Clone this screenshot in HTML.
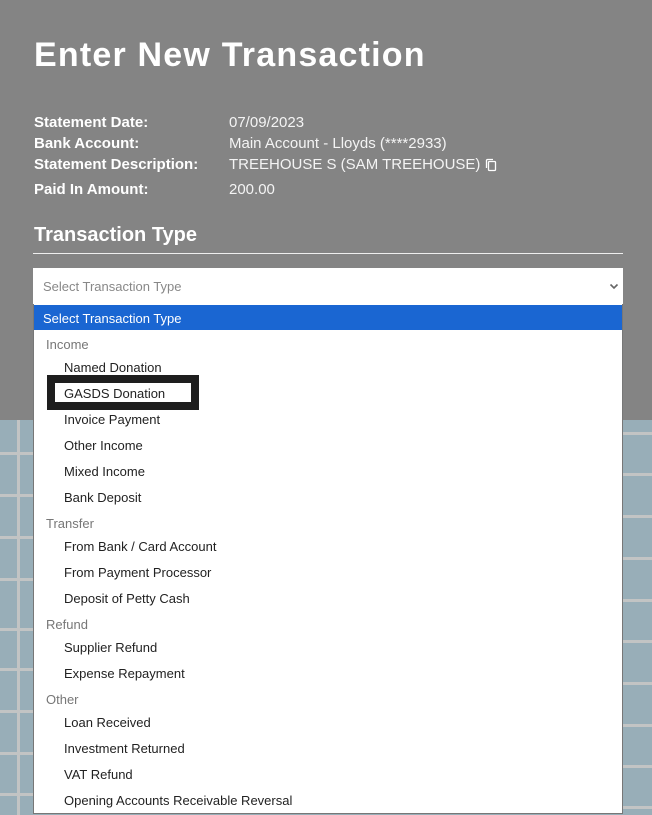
<!DOCTYPE html>
<html><head><style>
*{margin:0;padding:0;box-sizing:border-box}
body{width:652px;height:815px;overflow:hidden;position:relative;font-family:"Liberation Sans",sans-serif;background:#98aeb8}
.top{position:absolute;left:0;top:0;width:652px;height:420px;background:#848484;color:#fff}
.hl{position:absolute;height:3px;background:#c2c4c4}
.vl{position:absolute;width:3px;background:#c2c4c4}
h1{position:absolute;left:34px;top:36px;font-size:34px;font-weight:bold;letter-spacing:1.2px}
.lab{position:absolute;left:34px;font-size:15px;font-weight:bold}
.val{position:absolute;left:229px;font-size:15px;color:#f4f4f4}
h2{position:absolute;left:34px;top:224px;font-size:20px;font-weight:bold}
.rule{position:absolute;left:33px;top:253px;width:590px;height:1px;background:#eee}
.sel{position:absolute;left:33px;top:268px;width:590px;height:36px;background:#fff;color:#888;font-size:13px;padding:11px 10px}
.list{position:absolute;left:33px;top:304px;width:590px;height:510px;background:#fff;border:1px solid #777;border-top:none}
.hd{position:absolute;left:0;top:1px;width:588px;height:25px;background:#1a66d2;color:#fff;font-size:13px;padding:6px 9px}
.g{position:absolute;left:12px;font-size:13px;color:#777}
.i{position:absolute;left:30px;font-size:13px;color:#222}
.focus{position:absolute;left:13px;top:71px;width:152px;height:35px;border:8px solid #1e1e1e;background:#fff}
</style></head><body>
<div class="vl" style="left:17px;top:420px;height:395px"></div>
<div class="hl" style="left:0;top:452px;width:33px"></div>
<div class="hl" style="left:0;top:494px;width:33px"></div>
<div class="hl" style="left:0;top:536px;width:33px"></div>
<div class="hl" style="left:0;top:578px;width:33px"></div>
<div class="hl" style="left:0;top:628px;width:33px"></div>
<div class="hl" style="left:0;top:668px;width:33px"></div>
<div class="hl" style="left:0;top:710px;width:33px"></div>
<div class="hl" style="left:0;top:752px;width:33px"></div>
<div class="hl" style="left:0;top:793px;width:33px"></div>
<div class="hl" style="left:623px;top:432px;width:29px"></div>
<div class="hl" style="left:623px;top:473px;width:29px"></div>
<div class="hl" style="left:623px;top:515px;width:29px"></div>
<div class="hl" style="left:623px;top:557px;width:29px"></div>
<div class="hl" style="left:623px;top:599px;width:29px"></div>
<div class="hl" style="left:623px;top:640px;width:29px"></div>
<div class="hl" style="left:623px;top:682px;width:29px"></div>
<div class="hl" style="left:623px;top:724px;width:29px"></div>
<div class="hl" style="left:623px;top:765px;width:29px"></div>
<div class="hl" style="left:623px;top:806px;width:29px"></div>
<div class="top">
<h1>Enter New Transaction</h1>
<div class="lab" style="top:114px">Statement Date:</div><div class="val" style="top:114px">07/09/2023</div>
<div class="lab" style="top:135px">Bank Account:</div><div class="val" style="top:135px">Main Account - Lloyds (****2933)</div>
<div class="lab" style="top:156px">Statement Description:</div><div class="val" style="top:156px">TREEHOUSE S (SAM TREEHOUSE) <svg width="12" height="14" viewBox="0 0 12 14" style="vertical-align:-3px"><rect x="3.5" y="3.5" width="7" height="9" rx="1" fill="none" stroke="#fff" stroke-width="1.3"/><path d="M1.5 10V2.5a1 1 0 0 1 1-1H8" fill="none" stroke="#fff" stroke-width="1.3"/></svg></div>
<div class="lab" style="top:181px">Paid In Amount:</div><div class="val" style="top:181px">200.00</div>
<h2>Transaction Type</h2>
<div class="rule"></div>
</div>
<div class="sel">Select Transaction Type<svg width="10" height="7" viewBox="0 0 10 7" style="position:absolute;right:4px;top:15px"><path d="M1.5 1.5L5 5l3.5-3.5" fill="none" stroke="#666" stroke-width="1.6"/></svg></div>
<div class="list">
<div class="hd">Select Transaction Type</div>
<div class="focus"></div>
<div class="g" style="top:33px">Income</div>
<div class="i" style="top:56px">Named Donation</div>
<div class="i" style="top:82px">GASDS Donation</div>
<div class="i" style="top:108px">Invoice Payment</div>
<div class="i" style="top:134px">Other Income</div>
<div class="i" style="top:160px">Mixed Income</div>
<div class="i" style="top:186px">Bank Deposit</div>
<div class="g" style="top:212px">Transfer</div>
<div class="i" style="top:235px">From Bank / Card Account</div>
<div class="i" style="top:261px">From Payment Processor</div>
<div class="i" style="top:287px">Deposit of Petty Cash</div>
<div class="g" style="top:313px">Refund</div>
<div class="i" style="top:336px">Supplier Refund</div>
<div class="i" style="top:362px">Expense Repayment</div>
<div class="g" style="top:388px">Other</div>
<div class="i" style="top:411px">Loan Received</div>
<div class="i" style="top:437px">Investment Returned</div>
<div class="i" style="top:463px">VAT Refund</div>
<div class="i" style="top:489px">Opening Accounts Receivable Reversal</div>
</div>
</body></html>
